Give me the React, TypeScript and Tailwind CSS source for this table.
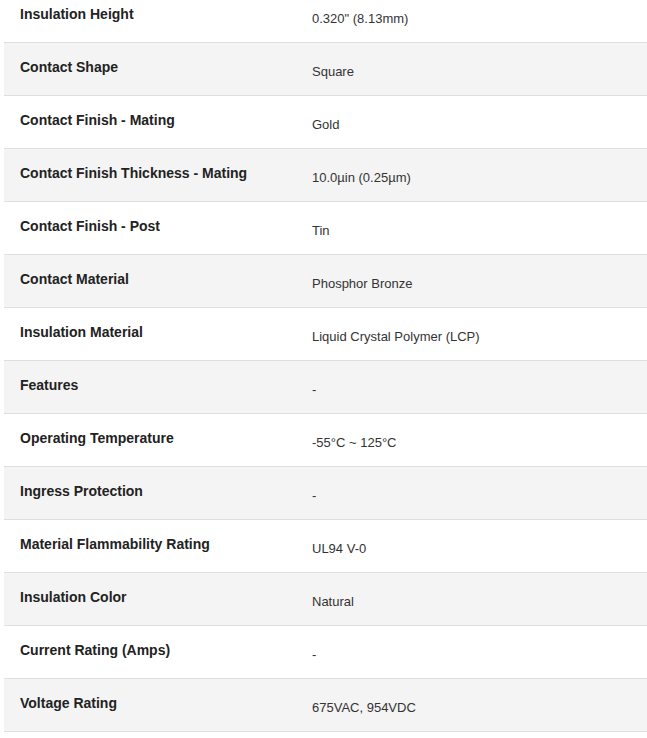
const specs: [string, string][] = [
  ["Insulation Height", "0.320\" (8.13mm)"],
  ["Contact Shape", "Square"],
  ["Contact Finish - Mating", "Gold"],
  ["Contact Finish Thickness - Mating", "10.0µin (0.25µm)"],
  ["Contact Finish - Post", "Tin"],
  ["Contact Material", "Phosphor Bronze"],
  ["Insulation Material", "Liquid Crystal Polymer (LCP)"],
  ["Features", "-"],
  ["Operating Temperature", "-55°C ~ 125°C"],
  ["Ingress Protection", "-"],
  ["Material Flammability Rating", "UL94 V-0"],
  ["Insulation Color", "Natural"],
  ["Current Rating (Amps)", "-"],
  ["Voltage Rating", "675VAC, 954VDC"],
];

export default function App() {
  return (
    <div className="min-h-screen bg-white overflow-hidden font-['Liberation_Sans',Arial,sans-serif]">
      <div className="ml-1 -mt-[10px]">
        {specs.map(([label, value], i) => (
          <div
            key={label}
            className={`grid grid-cols-[308px_1fr] h-[53px] border-b border-[#dedede] ${
              i % 2 === 1 ? "bg-[#f4f4f4]" : "bg-white"
            }`}
          >
            <div className="pl-4 pt-[16px] text-[14px] leading-[16px] font-bold text-[#222]">
              {label}
            </div>
            <div className="pt-[21px] text-[13px] leading-[15px] text-[#333]">
              {value}
            </div>
          </div>
        ))}
      </div>
    </div>
  );
}
